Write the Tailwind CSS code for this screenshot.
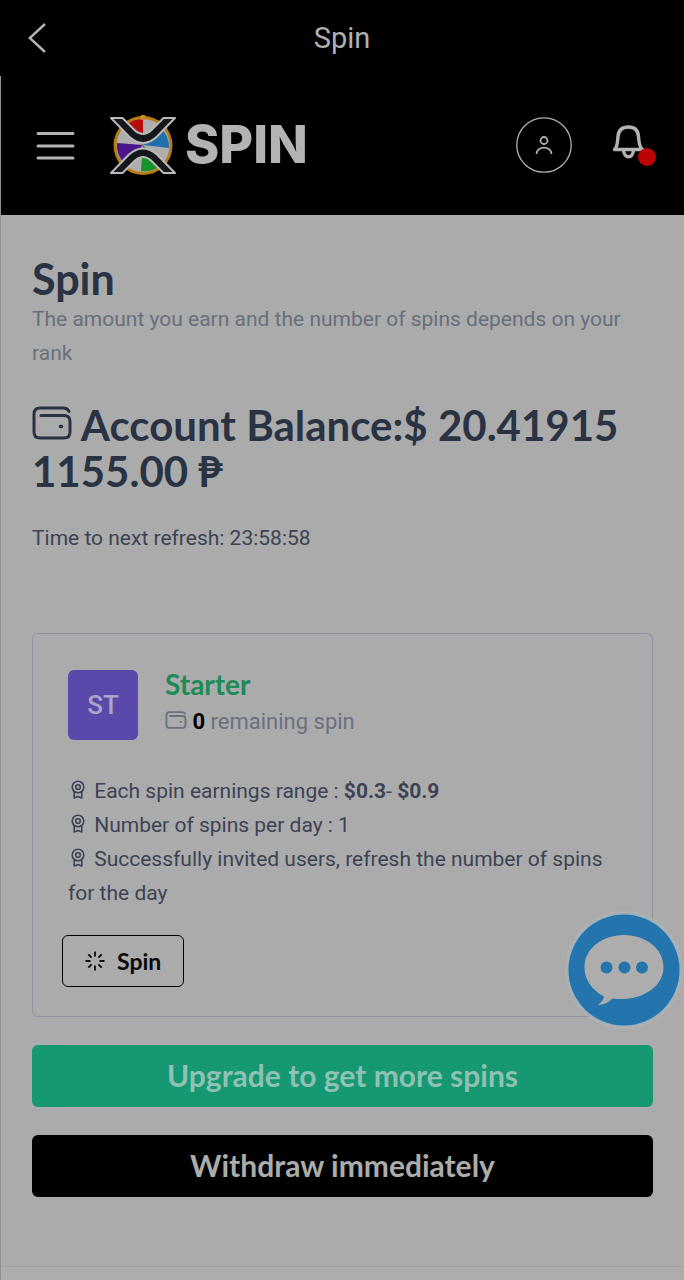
<!DOCTYPE html>
<html lang="en">
<head>
    <meta charset="UTF-8">
    <meta name="viewport" content="width=device-width, initial-scale=1.0">
    <title>Spin</title>
    <script src="https://cdn.jsdelivr.net/npm/@tailwindcss/browser@4"></script>
</head>
<body class="bg-[#ababab] font-['Roboto',sans-serif] text-[21px] leading-[34px] text-[#3c4354]">
    <!-- shared icons -->
    <svg class="hidden" aria-hidden="true">
        <symbol id="wallet" viewBox="0 0 40 34" fill="none" stroke="currentColor" stroke-linecap="round">
            <path d="M37 5.500C36 3 34 2 31 2H8Q2 2 2 8V26Q2 32 8 32H32Q38 32 38 26V15.500Q38 9.500 32 9.500H9"/>
            <path d="M28.500 20.500h1" stroke-width="3.500"/>
        </symbol>
        <symbol id="award" viewBox="0 0 14 20" fill="none" stroke="currentColor" stroke-width="1.600" stroke-linejoin="round">
            <circle cx="7" cy="7" r="5.800"/>
            <circle cx="7" cy="7" r="2.300"/>
            <path d="M3.200 11.500V18L7 16.500L10.800 18V11.500"/>
        </symbol>
    </svg>

    <!-- top bar -->
    <div class="grid h-[76px] grid-cols-[1fr_auto_1fr] items-center bg-black px-7">
        <button type="button" aria-label="Back" class="justify-self-start">
            <svg class="h-8 w-5" viewBox="0 0 20 32" fill="none" stroke="#b4b4b4" stroke-width="2.400"><path d="M17 2L1.800 16L17 30"/></svg>
        </button>
        <span class="text-[29px] text-[#b0b0b0]">Spin</span>
    </div>

    <div class="border-l border-[#8f8f8f]">
        <header class="flex h-[139px] items-center bg-black pr-10 pb-0.5 pl-[35px]">
            <button type="button" aria-label="Menu">
                <svg class="h-8 w-10" viewBox="0 0 40 32" stroke="#b4b4b4" stroke-width="3" stroke-linecap="round"><path d="M2 4.500H37M2 17H37M2 29H37"/></svg>
            </button>
            <a href="#" class="ml-[33px] flex items-center gap-2">
                <svg class="h-[62px] w-[68px]" viewBox="0 0 68 62" aria-hidden="true">
                    <circle cx="34" cy="31.500" r="28" fill="#aeaeae" stroke="#b77d13" stroke-width="3"/>
                    <path d="M34 31V5A26 26 0 0 0 17 11Z" fill="#b80b0b"/>
                    <path d="M34 31L52 14A26 26 0 0 1 60 34Z" fill="#216fac"/>
                    <path d="M34 31L8 29A26 26 0 0 0 16 50Z" fill="#4b168c"/>
                    <path d="M34 31L32 57A26 26 0 0 0 51 52Z" fill="#16922b"/>
                    <circle cx="34" cy="3.500" r="2.800" fill="#c88a24"/>
                    <g fill="#14171b" stroke="#b9b9b9" stroke-width="2" stroke-linejoin="round">
                        <path d="M2 4H13.500L26 16.500Q34 23.500 42 16.500L54.500 4H66L48 22.500Q34 35.500 20 22.500Z"/>
                        <path d="M2 59H13.500L26 46.500Q34 39.500 42 46.500L54.500 59H66L48 40.500Q34 28.500 20 40.500Z"/>
                    </g>
                </svg>
                <span class="font-['Inter',sans-serif] text-[52px] leading-none font-extrabold text-[#b3b3b3]">SPIN</span>
            </a>
            <button type="button" aria-label="Profile" class="ml-auto">
                <svg class="size-14" viewBox="0 0 56 56" fill="none" stroke="#b0b0b0">
                    <circle cx="28" cy="28" r="27.200" stroke-width="1.300"/>
                    <circle cx="28" cy="23.500" r="3.500" stroke-width="1.800"/>
                    <path d="M20.500 37C20.500 28.500 35.500 28.500 35.500 37" stroke-width="1.800"/>
                </svg>
            </button>
            <button type="button" aria-label="Notifications" class="relative ml-10">
                <svg class="h-[46px] w-8" viewBox="0 0 32 46" fill="none" stroke="#b3b3b3" stroke-width="3.400" stroke-linejoin="round">
                    <path d="M2.500 27.500C5.500 25 5.500 20 6 14.500C6.500 8 10.500 5 16.500 5C22.500 5 26 8 26.500 14.500C27 20 27 25 30.500 27.500Z"/>
                    <path d="M11.500 28C12 37 21 37 21.500 28"/>
                </svg>
                <span class="absolute -right-3 bottom-0.5 size-[18px] rounded-full bg-[#bc0303]"></span>
            </button>
        </header>

        <main class="px-[31px] pt-[41px] pb-[69px]">
            <h1 class="font-['Lato',sans-serif] text-[43px] leading-[46px] font-bold text-[#2a3343]">Spin</h1>
            <p class="text-[#67707b]">The amount you earn and the number of spins depends on your rank</p>

            <h2 class="mt-8 font-['Lato',sans-serif] text-[42px] leading-[46px] font-bold text-[#2a3343]">
                <svg class="inline h-[34px] w-10 align-[1px]" stroke-width="3" aria-hidden="true"><use href="#wallet"/></svg>
                Account Balance:$ 20.41915<br>1155.00 ₱
            </h2>
            <p class="mt-[27px]">Time to next refresh: 23:58:58</p>

            <section class="mt-[78px] rounded-md border border-[#9093a0] px-[35px] pt-9 pb-[29px]">
                <div class="flex gap-[27px]">
                    <div class="flex size-[70px] items-center justify-center rounded-md bg-[#5a49ab] text-[26px] font-medium text-[#aaa5c9]">ST</div>
                    <div>
                        <h3 class="pt-0.5 pb-[3px] font-['Lato',sans-serif] text-[28px] leading-6 font-bold text-[#1c8b56]">Starter</h3>
                        <p class="text-[22px] leading-[46px] text-[#697080]">
                            <svg class="inline h-[18px] w-[22px] align-[0px]" stroke-width="3.500" aria-hidden="true"><use href="#wallet"/></svg>
                            <b class="text-black">0</b> remaining spin
                        </p>
                    </div>
                </div>
                <ul class="mt-[29px]">
                    <li><svg class="mr-1 ml-[3px] inline h-5 w-3.5 align-[-2px]" aria-hidden="true"><use href="#award"/></svg> Each spin earnings range : <b>$0.3</b>- <b>$0.9</b></li>
                    <li><svg class="mr-1 ml-[3px] inline h-5 w-3.5 align-[-2px]" aria-hidden="true"><use href="#award"/></svg> Number of spins per day : 1</li>
                    <li><svg class="mr-1 ml-[3px] inline h-5 w-3.5 align-[-2px]" aria-hidden="true"><use href="#award"/></svg> Successfully invited users, refresh the number of spins for the day</li>
                </ul>
                <button type="button" class="mt-[25px] -ml-1.5 flex h-[52px] items-center gap-3 rounded-md border border-black px-[22px] font-['Lato',sans-serif] text-[23px] font-bold text-[#090909]">
                    <svg class="size-5" viewBox="0 0 20 20" stroke="currentColor" stroke-width="1.800" aria-hidden="true"><path d="M10 .5v5M10 14.500v5M.5 10h5M14.500 10h5M3.300 3.300l3.300 3.300M13.400 13.400l3.300 3.300M16.700 3.300l-3.300 3.300M6.600 13.400l-3.300 3.300"/></svg>
                    Spin
                </button>
            </section>

            <div class="mt-7 grid gap-7 font-['Lato',sans-serif] text-[30px] font-bold">
                <button type="button" class="h-[62px] rounded-md bg-[#169873] pb-0.5 text-[#8fc1b2]">Upgrade to get more spins</button>
                <button type="button" class="h-[62px] rounded-md bg-black pb-0.5 text-[#acacac]">Withdraw immediately</button>
            </div>
        </main>
        <footer class="h-3.5 border-t border-[#a0a1a8] bg-[#adadae]"></footer>
    </div>

    <!-- chat bubble -->
    <button type="button" aria-label="Open chat" class="fixed right-0 bottom-[250px]">
        <svg class="size-[120px]" viewBox="0 0 120 120">
            <circle cx="60" cy="60" r="59" fill="#b1b0af"/>
            <circle cx="60" cy="60" r="57" fill="#9bb2c2"/>
            <circle cx="60" cy="60" r="55.500" fill="#2474ad"/>
            <path d="M60 25C38 25 20.500 39 20.500 57C20.500 70 28 80 40 86.500C39.500 90 37 92.500 34 95C40.500 94.500 45 92 48.500 88.500C76 92 99.500 78 99.500 57C99.500 39 82 25 60 25Z" fill="#adadad"/>
            <g fill="#2474ad"><circle cx="42.500" cy="57.500" r="6"/><circle cx="60.500" cy="57.500" r="6"/><circle cx="78" cy="57.500" r="6"/></g>
        </svg>
    </button>
</body>
</html>
